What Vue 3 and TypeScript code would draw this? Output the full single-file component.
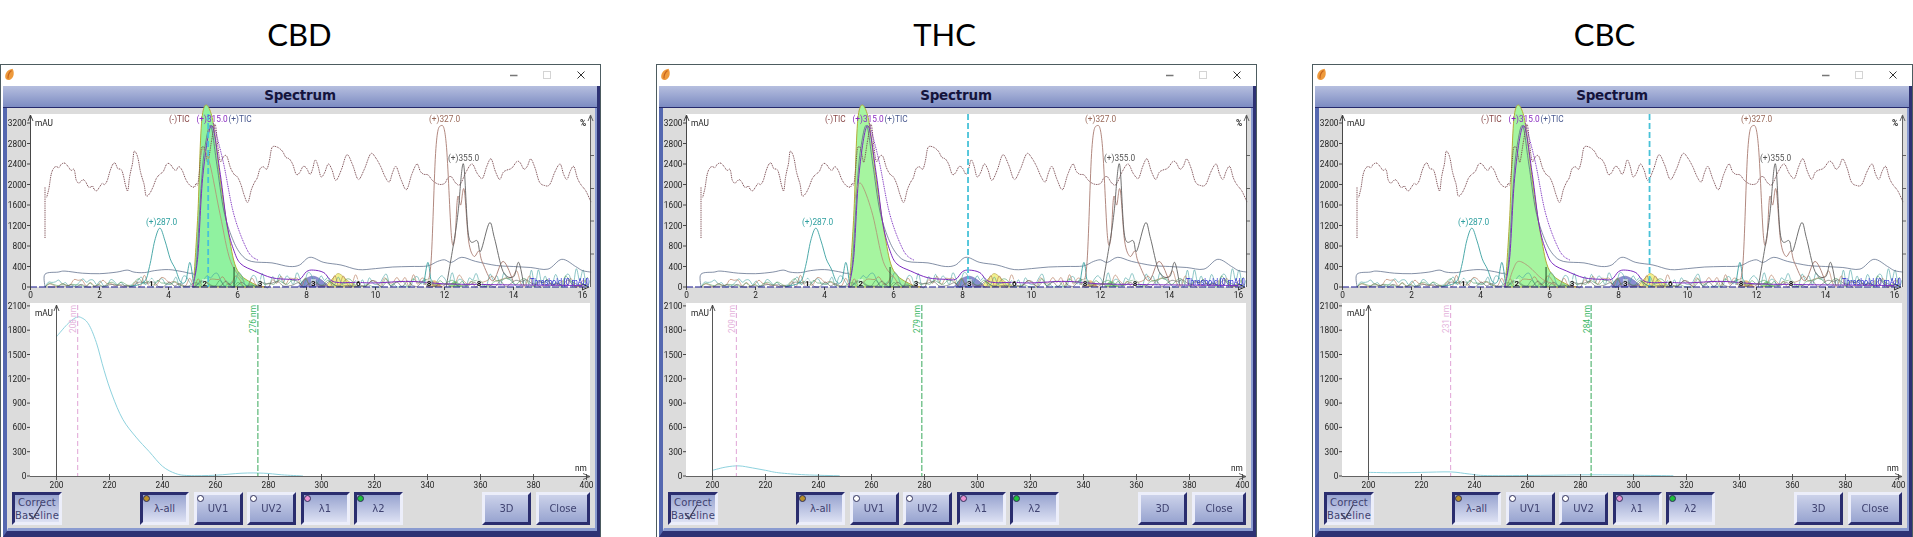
<script setup lang="ts">
type Pt = [number, number];

type Panel = {
  name: string;
  titleShift: number;
  cursor: number;
  fill: string;
  peakTail: Pt[];
  spectrum: Pt[];
  uv1: number;
  uv2: number;
};

// screen scale of the two plots, in window coordinates
const tx = (t: number) => 30.5 + t * 34.5;
const ty = (v: number) => 287 - v * 0.05125;
const nx = (n: number) => 56.5 + (n - 200) * 2.65;
const ny = (v: number) => 476 - v * 0.081;

function curve(pts: Pt[], fx: (a: number) => number, fy: (a: number) => number) {
  const p = pts.map(([a, b]) => [fx(a), fy(b)]);
  let d = `M${p[0][0].toFixed(1)} ${p[0][1].toFixed(1)}`;
  for (let i = 0; i < p.length - 1; i++) {
    const a = p[Math.max(i - 1, 0)];
    const b = p[i];
    const c = p[i + 1];
    const e = p[Math.min(i + 2, p.length - 1)];
    const c1x = b[0] + (c[0] - a[0]) / 6;
    const c1y = b[1] + (c[1] - a[1]) / 6;
    const c2x = c[0] - (e[0] - b[0]) / 6;
    const c2y = c[1] - (e[1] - b[1]) / 6;
    d += `C${c1x.toFixed(1)} ${c1y.toFixed(1)} ${c2x.toFixed(1)} ${c2y.toFixed(1)} ${c[0].toFixed(1)} ${c[1].toFixed(1)}`;
  }
  return d;
}

const chrom = (pts: Pt[]) => curve(pts, tx, ty);
const spec = (pts: Pt[]) => curve(pts, nx, ny);

// baseline chatter of the many small traces
function noise(seed: number, amp: number, step: number) {
  const pts: Pt[] = [];
  let s = seed;
  for (let t = 0.42; t < 16.25; t += step) {
    s = (s * 16807) % 2147483647;
    const r = s / 2147483647;
    const env = t > 13.6 ? 1.3 : t > 3 ? 1 : 0.6;
    pts.push([t, Math.pow(r, 1.5) * amp * env]);
  }
  return chrom(pts);
}

const ticPts: Pt[] = [
  [0.47, 1750], [0.6, 2200], [0.75, 2350], [0.9, 2400], [1.1, 2340], [1.25, 2300],
  [1.32, 2100], [1.45, 2050], [1.6, 2050], [1.75, 1950], [1.85, 1900], [2.0, 1950], [2.15, 2000], [2.3, 2250],
  [2.45, 2420], [2.6, 2300], [2.7, 2150], [2.82, 1880], [2.92, 2300], [3.0, 2640], [3.12, 2500], [3.25, 2100],
  [3.35, 1780], [3.55, 1950], [3.75, 2200], [3.95, 2400], [4.15, 2300], [4.3, 2350], [4.5, 2100], [4.75, 1950],
  [4.85, 2000], [4.95, 2680], [5.05, 2700], [5.15, 2450], [5.35, 3180], [5.5, 2450], [5.69, 2550], [5.9, 2200],
  [6.1, 2000], [6.3, 1650], [6.5, 2050], [6.65, 2300], [6.85, 2300], [7.0, 2720], [7.3, 2650], [7.5, 2500],
  [7.7, 2200], [7.9, 2350], [8.1, 2200], [8.25, 2480], [8.42, 2150], [8.63, 2400], [8.85, 2080], [9.17, 2580],
  [9.5, 2100], [9.86, 2600], [10.15, 2350], [10.4, 2050], [10.6, 2350], [10.9, 1900], [11.2, 2400], [11.4, 2200],
  [11.65, 2080], [12.0, 2020], [12.2, 2150], [12.45, 2000], [12.8, 2400], [13.1, 2120], [13.35, 2500], [13.6, 2100],
  [13.8, 2280], [14.1, 2450], [14.3, 2300], [14.5, 2500], [14.75, 2050], [15.05, 2000], [15.35, 2400], [15.55, 2100],
  [15.75, 2350], [15.95, 2000], [16.25, 1650],
];
// small wobble between the read-off points so the line is not too clean
const tic = chrom(
  ticPts.flatMap((p, i): Pt[] => {
    const next = ticPts[i + 1];
    if (!next) return [p];
    return [p, [(p[0] + next[0]) / 2, (p[1] + next[1]) / 2 + (i % 2 ? 45 : -45)]];
  }),
);

const posTic = chrom([
  [0.42, 0], [0.42, 250], [0.8, 290], [1.0, 310], [1.5, 270], [2, 260], [2.5, 290], [2.8, 330], [3, 290], [3.3, 280],
  [3.6, 320], [4, 340], [4.4, 300], [4.68, 270], [4.8, 400], [4.95, 2000], [5.05, 2700], [5.22, 3150], [5.4, 2400],
  [5.6, 1500], [5.85, 950], [6.1, 640], [6.4, 500], [7, 470], [7.5, 400], [7.8, 430], [8.1, 580], [8.5, 480], [9, 430],
  [9.5, 340], [10, 360], [10.5, 390], [11, 400], [11.5, 410], [11.8, 500], [12, 530], [12.2, 480], [12.5, 580],
  [12.9, 500], [13.5, 420], [14, 400], [14.5, 380], [15, 350], [15.4, 540], [15.8, 400], [16, 320], [16.25, 290],
]);

const purple = chrom([
  [4.7, 0], [4.85, 600], [5.0, 2200], [5.25, 3150], [5.5, 2200], [5.7, 1200], [5.9, 700], [6.1, 450], [6.5, 310],
  [7, 180], [7.5, 150], [7.8, 150], [8, 300], [8.2, 330], [8.5, 280], [8.8, 100], [9.5, 90], [10, 80], [11, 110],
  [12, 60], [13, 50], [14, 40], [16, 30],
]);

const purpleDots = chrom([[5.3, 3200], [5.6, 2400], [5.9, 1400], [6.3, 700], [6.6, 520]]);

const teal = chrom([
  [2.9, 10], [3.3, 100], [3.45, 400], [3.6, 900], [3.75, 1150], [3.9, 900], [4.05, 550], [4.2, 350], [4.35, 100],
  [4.5, 120], [4.62, 480], [4.72, 80],
]);
const tealSpike = chrom([[11.4, 50], [11.52, 480], [11.62, 40]]);

const b327 = chrom([
  [11.4, 40], [11.6, 400], [11.75, 2700], [11.9, 3150], [12.05, 2800], [12.2, 1000], [12.3, 950], [12.38, 1750],
  [12.47, 1600], [12.57, 1900], [12.7, 900], [12.85, 600], [13, 700], [13.1, 480], [13.4, 120], [13.7, 500], [14, 100],
]);

const g355 = chrom([
  [12.05, 0], [12.3, 1000], [12.4, 1500], [12.55, 2400], [12.7, 1000], [12.95, 900], [13.05, 700], [13.3, 1250],
  [13.45, 950], [13.7, 300], [14, 200], [14.15, 480], [14.3, 30],
]);

const greenPeak =
  chrom([[4.72, 0], [4.85, 1400], [4.98, 3350], [5.25, 3350], [5.5, 2100], [5.75, 1000], [6, 320], [6.5, 50], [6.8, 0]]) + 'Z';
const bluePeak = chrom([[7.75, 0], [7.95, 150], [8.2, 210], [8.45, 130], [8.65, 0]]) + 'Z';
const yellowPeak = chrom([[8.55, 0], [8.8, 200], [8.95, 260], [9.2, 120], [9.5, 0]]) + 'Z';
const greenSmall = chrom([[12.1, 0], [12.3, 120], [12.55, 0]]) + 'Z';
const orangeSmall = chrom([[11.45, 0], [11.7, 130], [11.95, 0]]) + 'Z';

const chatter = [
  { d: noise(4711, 280, 0.1), color: '#3f9f9f' },
  { d: noise(9127, 240, 0.12), color: '#b07050' },
  { d: noise(2203, 170, 0.13), color: '#4d9a5a' },
  { d: noise(7717, 120, 0.15), color: '#5a5a5a' },
];

const marks: [number, string][] = [
  [3.5, '1'], [5.05, '2'], [6.65, '3'], [8.2, '3'], [9.5, '6'], [11.55, '8'], [13.0, '8'],
];

const yTicksTop = [0, 400, 800, 1200, 1600, 2000, 2400, 2800, 3200];
const xTicksTop = [0, 2, 4, 6, 8, 10, 12, 14, 16];
const yTicksLow = [0, 300, 600, 900, 1200, 1500, 1800, 2100];
const xTicksLow = [200, 220, 240, 260, 280, 300, 320, 340, 360, 380, 400];
const rightTicks = [155.5, 188.5, 221, 254];

const panels: Panel[] = [
  {
    name: 'CBD',
    titleShift: 2,
    cursor: 5.15,
    fill: '#90f2a0',
    peakTail: [[4.92, 2500], [5.0, 2700], [5.2, 2400], [5.5, 1400], [5.8, 500], [6.2, 100]],
    spectrum: [
      [200, 1720], [204, 1870], [207, 1950], [209, 1960], [212, 1880], [215, 1650], [218, 1300], [221, 1000],
      [225, 700], [230, 480], [235, 300], [240, 120], [245, 30], [250, 5], [260, 10], [270, 35], [278, 35],
      [285, 15], [293, 0],
    ],
    uv1: 208,
    uv2: 276,
  },
  {
    name: 'THC',
    titleShift: 24,
    cursor: 8.16,
    fill: '#a6f5a0',
    peakTail: [[4.88, 1700], [4.98, 2000], [5.12, 1950], [5.4, 1400], [5.7, 500], [6, 200]],
    spectrum: [[200, 70], [205, 110], [210, 125], [215, 100], [220, 70], [225, 40], [235, 15], [248, 3]],
    uv1: 209,
    uv2: 279,
  },
  {
    name: 'CBC',
    titleShift: 16,
    cursor: 8.9,
    fill: '#a6f5a0',
    peakTail: [[4.85, 150], [4.95, 350], [5.1, 500], [5.4, 400], [5.8, 150], [6.2, 40]],
    spectrum: [
      [200, 45], [210, 40], [220, 45], [231, 50], [238, 25], [245, 5], [265, 8], [284, 15], [300, 10], [315, 3],
    ],
    uv1: 231,
    uv2: 284,
  },
];

const lambdaButtons = [
  { label: 'λ-all', dot: '#b8902a', pressed: true },
  { label: 'UV1', dot: '#ffffff', pressed: false },
  { label: 'UV2', dot: '#ffffff', pressed: false },
  { label: 'λ1', dot: '#ea93d2', pressed: true },
  { label: 'λ2', dot: '#1fbf3a', pressed: true },
];
</script>

<template>
  <div class="page">
    <section v-for="p in panels" :key="p.name" class="panel">
      <h1 class="name" :style="{ paddingRight: p.titleShift + 'px' }">{{ p.name }}</h1>

      <div class="window">
        <div class="titlebar">
          <svg class="leaf" width="12" height="13" viewBox="0 0 12 13">
            <path d="M8.5 .8C4 1.5 1 5 1.2 9c.2 2.5 2.5 3.6 4.8 2.7C9.500 10.300 11 5 8.500 .8Z" fill="#ee9a3c" />
            <path d="M7.500 2.500C5 4.500 3.800 7 4 10.500" fill="none" stroke="#c8641c" stroke-width="1.200" />
          </svg>
          <svg class="controls" width="78" height="12" viewBox="0 0 78 12">
            <path d="M0 6.500H7.500" stroke="#777" stroke-width="1.500" />
            <rect x="33.500" y="2.500" width="7" height="7" fill="#fff" stroke="#d4d4d4" />
            <path d="M67.500 2.500l7 7M74.500 2.500l-7 7" stroke="#333" stroke-width="1" fill="none" />
          </svg>
        </div>

        <div class="frame">
          <div class="frame-head">Spectrum</div>
          <div class="content">
            <!-- chromatogram, viewBox is in window pixels -->
            <svg class="plot" width="587" height="196" viewBox="8 108 587 196">
              <rect x="30" y="114" width="560" height="173" fill="#fff" />
              <path :d="yellowPeak" fill="#f2f08e" stroke="#b0a040" stroke-width=".6" />
              <path :d="bluePeak" fill="#8a8ed2" stroke="#6a6ab0" stroke-width=".6" />
              <path :d="greenSmall" fill="#90e490" />
              <path :d="orangeSmall" fill="#eec080" />
              <path :d="greenPeak" :fill="p.fill" stroke="#b2ac38" stroke-width="1" />
              <path v-for="(c, i) in chatter" :key="i" :d="c.d" fill="none" :stroke="c.color" stroke-width=".6" />
              <path :d="posTic" fill="none" stroke="#4f6080" stroke-width=".7" />
              <path d="M45 238V187" stroke="#7a4a50" stroke-width="1" stroke-dasharray="1 .8" />
              <path :d="tic" fill="none" stroke="#7a4a50" stroke-width="1" stroke-dasharray="1 .8" />
              <path :d="purpleDots" fill="none" stroke="#7c30c0" stroke-width="1" stroke-dasharray="1 .8" />
              <path :d="purple" fill="none" stroke="#7c2cc0" stroke-width="1" />
              <path :d="chrom(p.peakTail)" fill="none" stroke="#b09a78" stroke-width=".9" />
              <path :d="teal" fill="none" stroke="#3aa0a0" stroke-width=".9" />
              <path :d="tealSpike" fill="none" stroke="#3aa0a0" stroke-width=".9" />
              <path :d="b327" fill="none" stroke="#a87a70" stroke-width=".9" />
              <path :d="g355" fill="none" stroke="#606060" stroke-width=".9" />
              <path :d="`M${tx(5.9)} 267V287`" stroke="#1c4a24" stroke-width="1" />
              <path
                :d="`M${tx(p.cursor)} 114V287`"
                stroke="#48c2d8"
                stroke-width="1.800"
                stroke-dasharray="6 3"
              />
              <path d="M30 287H586" stroke="#14148c" stroke-width="1.200" stroke-dasharray="7 2" />
              <path d="M30.500 287V116M28 121l2.500-6 2.500 6" fill="none" stroke="#333" stroke-width=".9" />
              <path d="M590.500 287V116M588 121l2.500-6 2.500 6" fill="none" stroke="#555" stroke-width=".9" />
              <path d="M582 284l7 3-7 3" fill="none" stroke="#222" stroke-width=".9" />

              <g v-for="m in marks" :key="m[0]">
                <rect :x="tx(m[0]) - 2.500" y="279" width="5" height="7" fill="#fff" opacity=".55" />
                <text :x="tx(m[0])" y="285.500" class="lbl mid mark">{{ m[1] }}</text>
              </g>

              <text x="169" y="122" class="lbl" fill="#8a4a4a">(-)TIC</text>
              <text x="196.500" y="122" class="lbl" fill="#8a2cc0">(+)315.0</text>
              <text x="228.500" y="122" class="lbl" fill="#4a5a90">(+)TIC</text>
              <text x="429" y="122" class="lbl" fill="#9a6a5a">(+)327.0</text>
              <text x="448" y="161" class="lbl" fill="#555">(+)355.0</text>
              <text x="146" y="225" class="lbl" fill="#30a0a0">(+)287.0</text>
              <text x="35" y="126" class="lbl" fill="#222">mAU</text>
              <text x="580" y="126" class="lbl" fill="#222" font-weight="bold">%</text>
              <text x="530" y="285" class="lbl" fill="#2a2ad0" textLength="59" lengthAdjust="spacingAndGlyphs">Threshold [0 mAU]</text>

              <g v-for="v in yTicksTop" :key="v">
                <path :d="`M27 ${ty(v)}H30`" stroke="#333" stroke-width=".9" />
                <text x="26.500" :y="ty(v) + 3" class="lbl end" fill="#222">{{ v }}</text>
              </g>
              <g v-for="t in xTicksTop" :key="t">
                <path :d="`M${tx(t)} 287V290`" stroke="#333" stroke-width=".9" />
                <text :x="tx(t)" y="298" class="lbl mid" fill="#222">{{ t }}</text>
              </g>
              <path v-for="r in rightTicks" :key="r" :d="`M590 ${r}H594`" stroke="#555" stroke-width=".9" />
            </svg>

            <!-- uv spectrum -->
            <svg class="plot" width="587" height="188" viewBox="8 304 587 188">
              <rect x="30" y="303" width="560" height="173" fill="#fff" />
              <path :d="spec(p.spectrum)" fill="none" stroke="#8ed2de" stroke-width="1" />
              <path :d="`M${nx(p.uv1)} 305V476`" stroke="#e0a4d6" stroke-width="1" stroke-dasharray="5 3" />
              <path :d="`M${nx(p.uv2)} 305V476`" stroke="#37a85a" stroke-width="1" stroke-dasharray="6 2" />
              <text
                class="lbl"
                fill="#e4b4dc"
                :transform="`translate(${nx(p.uv1) - 1.500} 333) rotate(-90)`"
              >{{ p.uv1 }} nm</text>
              <text
                class="lbl"
                fill="#3cb866"
                :transform="`translate(${nx(p.uv2) - 1.500} 333) rotate(-90)`"
              >{{ p.uv2 }} nm</text>
              <path d="M56.500 476V305M54 311l2.500-6 2.500 6" fill="none" stroke="#444" stroke-width=".9" />
              <path d="M30 476.500H590M583 473.500l7 3-7 3" fill="none" stroke="#555" stroke-width=".9" />
              <text x="35" y="316" class="lbl" fill="#222">mAU</text>
              <text x="575" y="471" class="lbl" fill="#222">nm</text>
              <g v-for="v in yTicksLow" :key="v">
                <path :d="`M27 ${ny(v)}H30`" stroke="#333" stroke-width=".9" />
                <text x="26.500" :y="ny(v) + 3" class="lbl end" fill="#222">{{ v }}</text>
              </g>
              <g v-for="n in xTicksLow" :key="n">
                <path :d="`M${nx(n)} 474V480`" stroke="#444" stroke-width=".9" />
                <text :x="nx(n)" y="488" class="lbl mid" fill="#222">{{ n }}</text>
              </g>
            </svg>

            <div class="buttons">
              <button class="btn pressed baseline">
                Correct<br />Baseline
                <svg class="check" width="18" height="20" viewBox="0 0 18 20">
                  <path d="M2 10l4 6L14 2" fill="none" stroke="#3a3a55" stroke-width="1.100" />
                </svg>
              </button>
              <div class="group">
                <button v-for="b in lambdaButtons" :key="b.label" class="btn" :class="{ pressed: b.pressed }">
                  <i class="dot" :style="{ background: b.dot }"></i>
                  {{ b.label }}
                </button>
              </div>
              <div class="group right">
                <button class="btn">3D</button>
                <button class="btn wide">Close</button>
              </div>
            </div>
          </div>
        </div>
      </div>
    </section>
  </div>
</template>

<style>
html,
body {
  background: #fff;
  overflow: hidden;
}
</style>

<style scoped>
.page {
  width: 1913px;
  height: 537px;
  overflow: hidden;
  display: flex;
  gap: 55px;
  background: #fff;
}

.panel {
  flex: 0 0 601px;
  display: flex;
  flex-direction: column;
}

.name {
  height: 60px;
  margin: 0;
  padding-top: 4px;
  box-sizing: content-box;
  display: flex;
  align-items: center;
  justify-content: center;
  font-family: Lato, "Open Sans", sans-serif;
  font-weight: 400;
  font-size: 31px;
  color: #000;
}

.window {
  height: 473px;
  box-sizing: border-box;
  border: 1px solid #4d5c60;
  border-bottom: 0;
  background: #fff;
  display: flex;
  flex-direction: column;
}

.titlebar {
  height: 21px;
  flex: none;
  display: flex;
  align-items: center;
  justify-content: space-between;
  padding: 0 12px 2px 3px;
  box-sizing: border-box;
}

.frame {
  flex: 1;
  margin-left: 2px;
  display: flex;
  flex-direction: column;
  border-left: 4px solid #5568b0;
  border-right: 3px solid #2e3274;
  border-bottom: 6px solid #2e3274;
  min-height: 0;
}

.frame-head {
  height: 22px;
  flex: none;
  margin-left: -4px;
  padding-bottom: 3px;
  box-sizing: border-box;
  background: linear-gradient(#b6bfdf, #7c8bc2);
  border-bottom: 1px solid #252a6c;
  display: flex;
  align-items: center;
  justify-content: center;
  font-family: "DejaVu Sans", sans-serif;
  font-weight: 700;
  font-size: 13.5px;
  letter-spacing: -0.2px;
  color: #14143c;
}

.content {
  flex: 1;
  background: #dcdcdc;
  border-left: 1px solid #dcdcdc;
  border-right: 2px solid #8a9bd0;
  border-bottom: 3px solid #8a9bd0;
  display: flex;
  flex-direction: column;
  min-height: 0;
}

.plot {
  display: block;
  flex: none;
  overflow: visible;
  filter: blur(0.3px);
}

.lbl {
  font-family: Roboto, "DejaVu Sans", sans-serif;
  font-size: 8.3px;
}

.end {
  text-anchor: end;
}

.mid {
  text-anchor: middle;
}

.mark {
  font-size: 8px;
  font-weight: bold;
  fill: #111;
}

.buttons {
  display: flex;
  padding: 0 5px 0 4px;
  height: 33px;
}

.group {
  display: flex;
  gap: 4.5px;
  margin-left: 78px;
}

.group.right {
  margin-left: auto;
  gap: 5px;
}

.btn {
  position: relative;
  width: 49px;
  height: 33px;
  padding: 0;
  box-sizing: border-box;
  border: 3px solid;
  border-color: #eceefa #2a2d6e #2a2d6e #eceefa;
  background: linear-gradient(#ccd2ea, #98a4d0);
  font-family: "DejaVu Sans", sans-serif;
  font-size: 10px;
  line-height: 13px;
  color: #3f4270;
}

.btn.pressed {
  border-color: #2a2d6e #eceefa #eceefa #2a2d6e;
  background: linear-gradient(#98a4d0, #dde1f3);
}

.btn.wide {
  width: 54px;
}

.baseline {
  width: 50px;
  letter-spacing: 0.2px;
  white-space: nowrap;
}

.check {
  position: absolute;
  left: 12px;
  top: 8px;
}

.dot {
  position: absolute;
  left: 0;
  top: 0;
  width: 5px;
  height: 5px;
  border-radius: 50%;
  border: 1px solid #30305a;
}
</style>
